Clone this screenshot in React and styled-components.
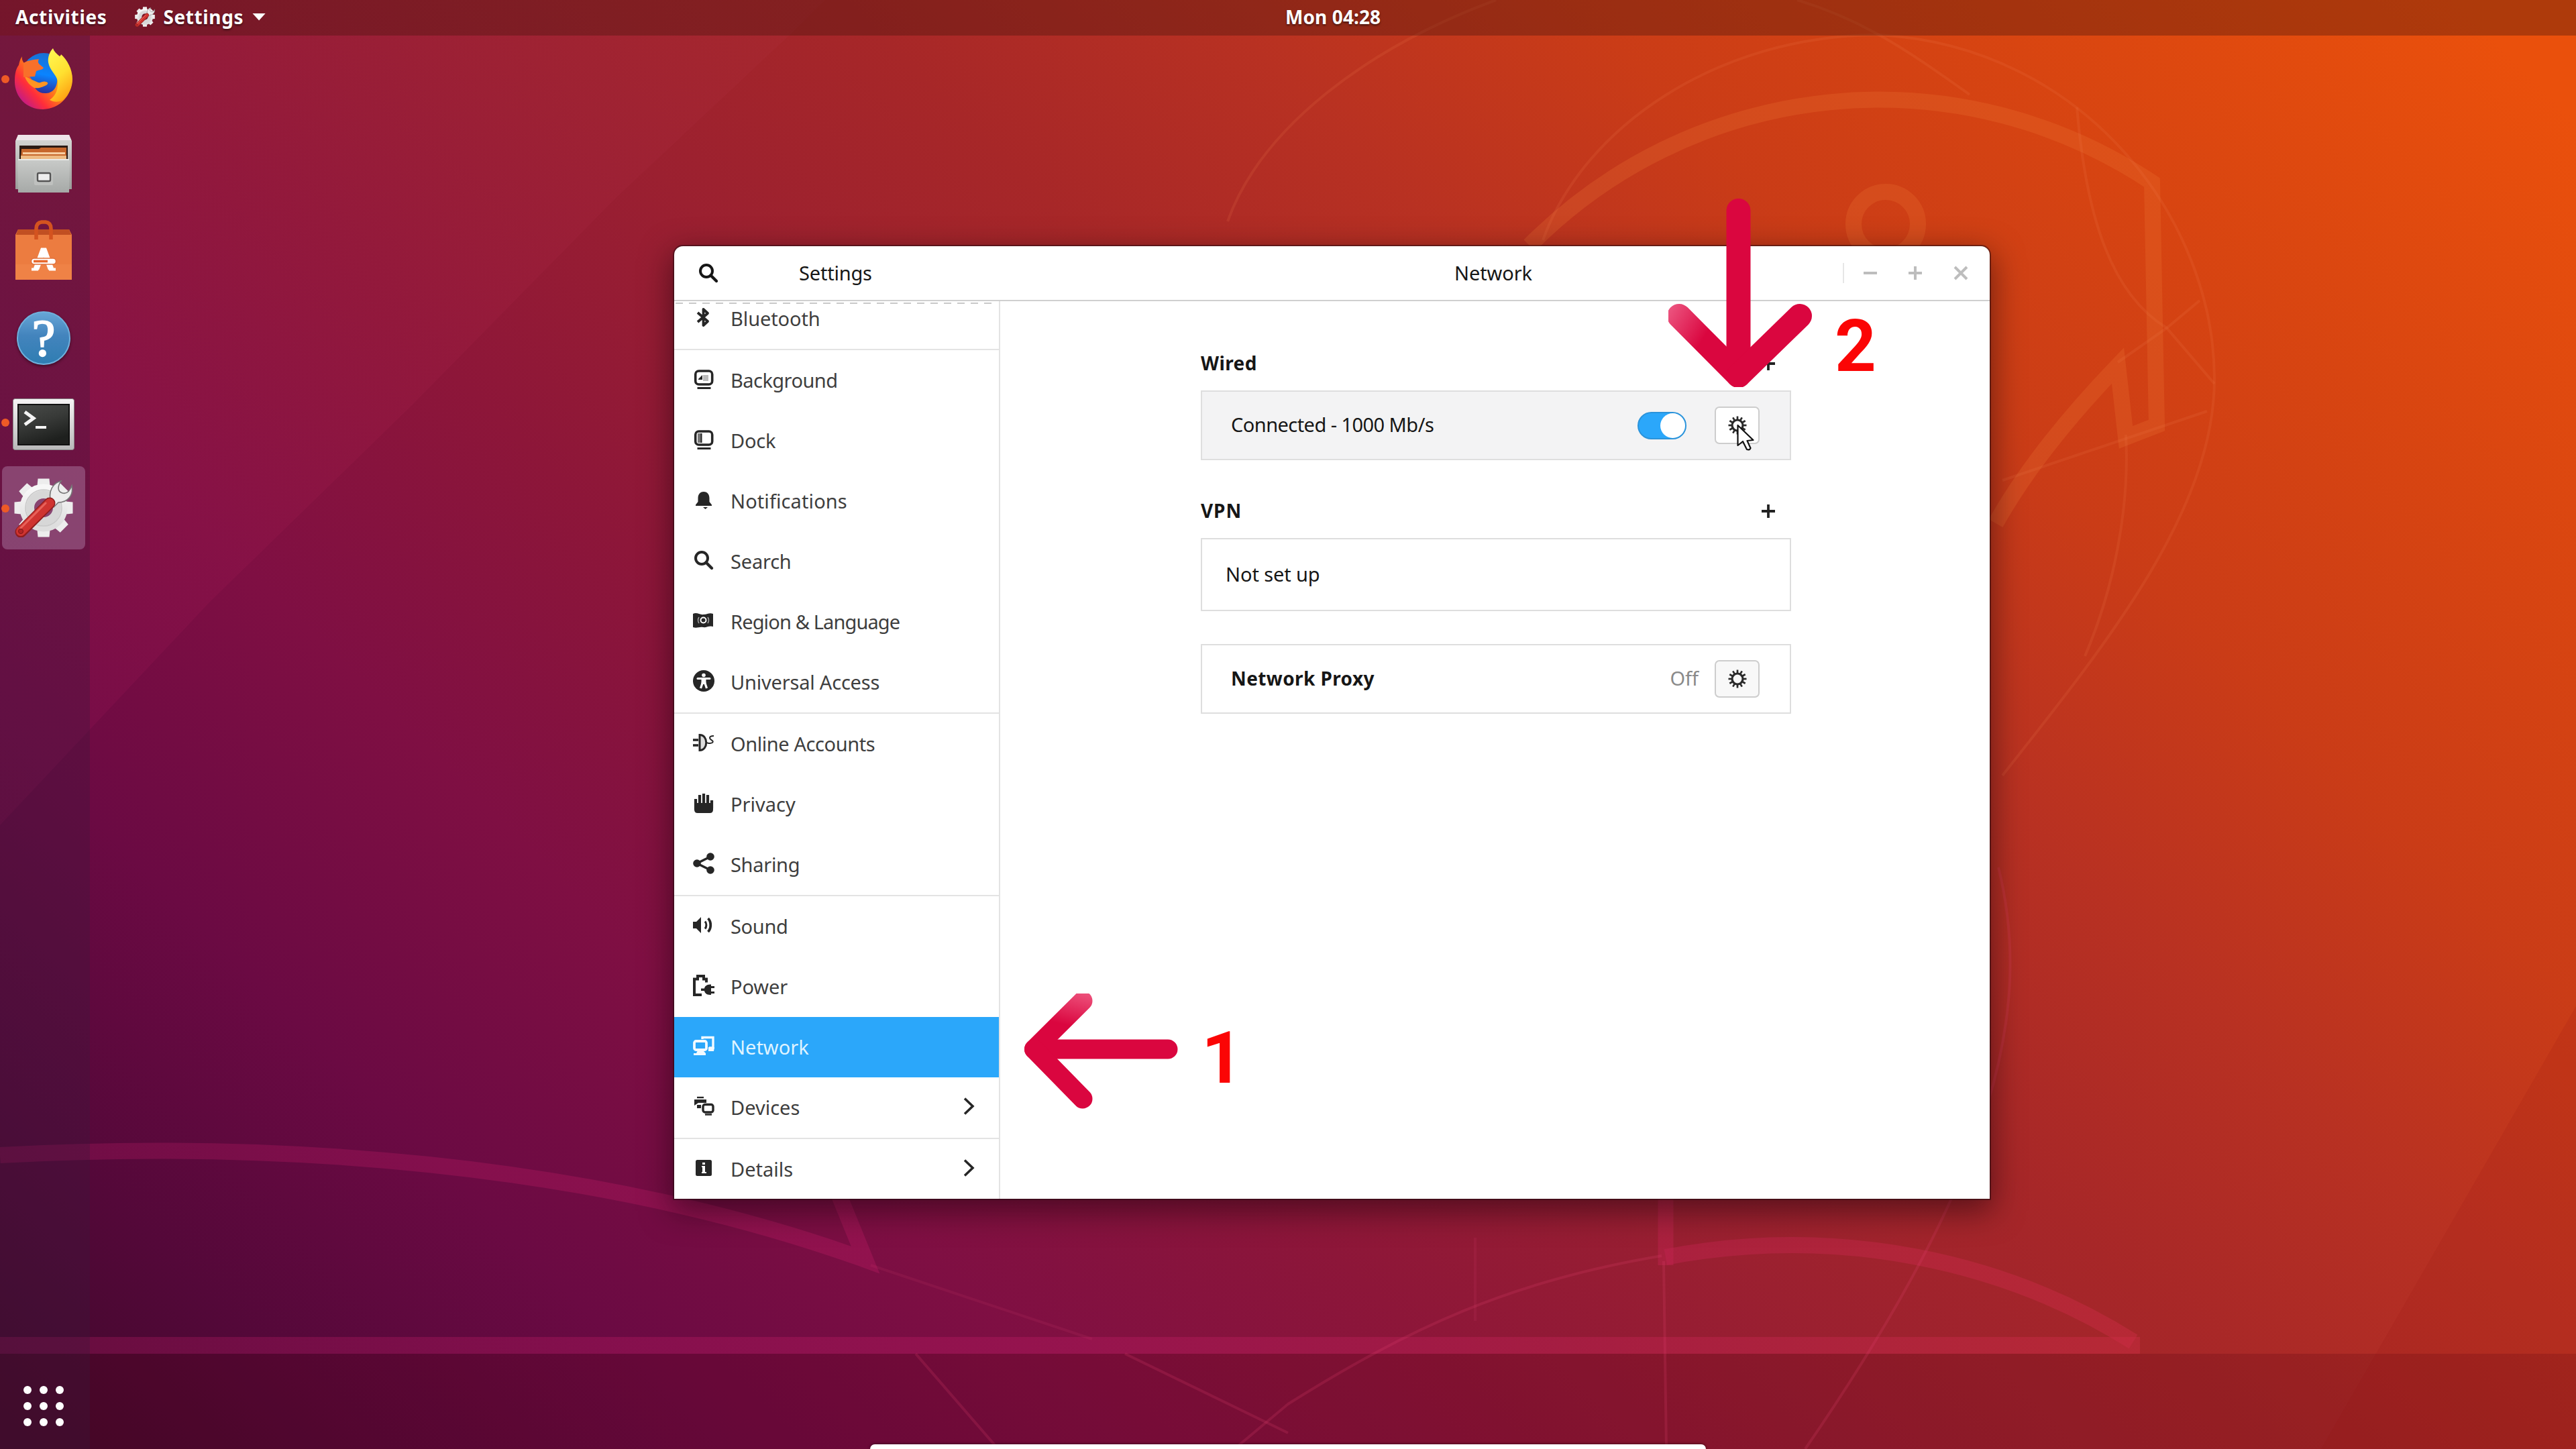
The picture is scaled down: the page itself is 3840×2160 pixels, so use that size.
import React from "react";
import styled, { createGlobalStyle, css } from "styled-components";

const GlobalStyle = createGlobalStyle`
  * { box-sizing: border-box; }
  html, body { margin: 0; padding: 0; background: #6a0a42; }
  svg { display: block; flex: none; }
`;

const Desktop = styled.div`
  position: relative;
  display: flex;
  flex-direction: column;
  width: 3840px;
  height: 2160px;
  overflow: hidden;
  font-family: "Noto Sans", "Open Sans", sans-serif;
  font-size: 29px;
  color: #161616;
  background: linear-gradient(
    45deg,
    #40082b 1%,
    #540839 9%,
    #6b0a43 18%,
    #7f0f43 28%,
    #8d1639 38%,
    #9b2030 48%,
    #a72728 57%,
    #b83122 66%,
    #ca3c17 75%,
    #d84511 85%,
    #ea500c 97%
  );
`;

const WallpaperArt = styled.svg`
  position: absolute;
  inset: 0;
`;

const TopBar = styled.header`
  position: relative;
  display: grid;
  grid-template-columns: 1916px auto 1fr;
  align-items: center;
  height: 53px;
  padding-bottom: 3px;
  background: rgba(70, 20, 10, 0.36);
  color: #fff;
  font-size: 28px;
  font-weight: 700;
  text-shadow: 0 2px 3px rgba(0, 0, 0, 0.5);
`;

const TopLeft = styled.div`
  display: flex;
  align-items: center;
  padding-left: 23px;
`;

const Label = styled.span`
  white-space: nowrap;
  letter-spacing: ${(p) => p.$track || 0}px;
`;

const AppMenu = styled.div`
  display: flex;
  align-items: center;
  margin-left: 41px;
  gap: 13px;
`;

const Caret = styled.i`
  width: 20px;
  height: 11px;
  background: #fff;
  clip-path: polygon(0 0, 100% 0, 50% 100%);
`;

const Body = styled.div`
  position: relative;
  display: flex;
  flex: 1;
  min-height: 0;
`;

const Dock = styled.nav`
  display: flex;
  flex-direction: column;
  width: 134px;
  background: rgba(60, 25, 60, 0.32);
`;

const DockTile = styled.div`
  position: relative;
  display: flex;
  align-items: center;
  justify-content: center;
  width: 124px;
  height: 124px;
  margin: 2px 0 2px 3px;
  padding-top: ${(p) => p.$drop || 0}px;
  border-radius: 8px;
  ${(p) =>
    p.$active &&
    css`
      background: rgba(190, 150, 190, 0.38);
    `}
`;

const RunningDot = styled.i`
  position: absolute;
  left: -1px;
  top: 57px;
  width: 12px;
  height: 12px;
  border-radius: 50%;
  background: #ee5a26;
`;

const AppGrid = styled.div`
  display: grid;
  grid-template-columns: repeat(3, 12px);
  gap: 12px;
  margin: auto 0 34px 35px;
`;

const GridDot = styled.i`
  width: 12px;
  height: 12px;
  border-radius: 50%;
  background: #fff;
`;

const Workspace = styled.main`
  flex: 1;
  padding: 314px 0 0 871px;
`;

const Window = styled.section`
  display: flex;
  flex-direction: column;
  width: 1961px;
  height: 1420px;
  border-radius: 13px 13px 0 0;
  background: #fff;
  box-shadow: 0 0 0 2px rgba(40, 10, 15, 0.5), 0 14px 46px 4px rgba(20, 0, 10, 0.5);
  overflow: hidden;
`;

const TitleBar = styled.div`
  display: flex;
  align-items: center;
  height: 82px;
  border-bottom: 2px solid #cfcfcf;
`;

const SideTitle = styled.div`
  display: flex;
  align-items: center;
  width: 486px;
  padding-left: 35px;
`;

const SettingsTitle = styled.span`
  margin-left: 119px;
  padding-bottom: 2px;
  letter-spacing: -0.2px;
`;

const MainTitle = styled.span`
  width: 1256px;
  padding: 0 0 2px 677px;
  letter-spacing: -0.1px;
`;

const WindowButtons = styled.div`
  display: flex;
  align-items: center;
  gap: 47px;
  height: 30px;
  padding-left: 29px;
  border-left: 2px solid #e6e6e6;
`;

const Content = styled.div`
  display: flex;
  flex: 1;
  min-height: 0;
`;

const Sidebar = styled.aside`
  position: relative;
  width: 486px;
  border-right: 2px solid #e3e3e3;
  overflow: hidden;
`;

const Undershoot = styled.i`
  position: absolute;
  left: 2px;
  right: 2px;
  top: 2px;
  height: 2px;
  background: repeating-linear-gradient(90deg, #c9c9c9 0 11px, #fff 11px 20px);
`;

const NavList = styled.ul`
  list-style: none;
  margin: -19px 0 0;
  padding: 0;
`;

const Group = styled.div`
  & + & {
    border-top: 2px solid #e3e3e3;
  }
`;

const NavRow = styled.li`
  display: flex;
  align-items: center;
  height: 90px;
  padding: 0 36px 0 28px;
  color: ${(p) => (p.$selected ? "#dff3ff" : "#3e3e3e")};
  background: ${(p) => (p.$selected ? "#2ba7fa" : "transparent")};

  > svg {
    color: ${(p) => (p.$selected ? "#f2faff" : "#262626")};
    margin-bottom: 4px;
  }
`;

const NavText = styled.span`
  flex: 1;
  padding: 0 0 2px 24px;
  white-space: nowrap;
  letter-spacing: ${(p) => p.$track || 0}px;
`;

const Pane = styled.div`
  width: 880px;
  margin: 72px 0 0 299px;
`;

const SectionHead = styled.div`
  display: flex;
  align-items: center;
  justify-content: space-between;
  height: 41px;
  margin-bottom: 20px;
  padding-right: 24px;
  font-size: 28px;
  font-weight: 700;

  > span {
    padding-bottom: 2px;
  }
`;

const Card = styled.div`
  display: flex;
  align-items: center;
  height: ${(p) => p.$h || 104}px;
  margin-bottom: ${(p) => p.$gap || 0}px;
  padding: 0 45px 0 ${(p) => p.$pad || 43}px;
  border: 2px solid #dedede;
  background: ${(p) => (p.$hover ? "#f3f3f4" : "#fff")};
`;

const CardLabel = styled.span`
  flex: 1;
  padding-bottom: 3px;
  font-weight: ${(p) => (p.$bold ? 700 : 400)};
  font-size: ${(p) => (p.$bold ? 28 : 29)}px;
  letter-spacing: ${(p) => p.$track || 0}px;
`;

const Muted = styled.span`
  margin-right: 24px;
  padding-bottom: 3px;
  color: #8a8a8a;
`;

const Toggle = styled.span`
  display: flex;
  justify-content: flex-end;
  width: 73px;
  height: 41px;
  margin-right: 42px;
  border-radius: 21px;
  background: #2ba7fa;
  border: 2px solid #2b93da;
`;

const Knob = styled.i`
  width: 37px;
  height: 37px;
  border-radius: 50%;
  background: #fff;
`;

const GearButton = styled.span`
  display: flex;
  align-items: center;
  justify-content: center;
  width: 67px;
  height: 56px;
  border: 2px solid #cdcdcd;
  border-radius: 7px;
  background: ${(p) => (p.$hover ? "#fff" : "#f8f8f8")};
`;

const Overlay = styled.svg`
  position: absolute;
  left: ${(p) => p.$x}px;
  top: ${(p) => p.$y}px;
`;

const StepNumber = styled.span`
  position: absolute;
  left: ${(p) => p.$x}px;
  top: ${(p) => p.$y}px;
  font: 700 108px/108px Roboto, sans-serif;
  color: #fb0505;
`;

const HiddenWindow = styled.div`
  position: absolute;
  left: 1297px;
  bottom: 0;
  width: 1246px;
  height: 7px;
  border-radius: 12px 12px 0 0;
  background: #fff;
  box-shadow: 0 0 4px rgba(0, 0, 0, 0.6);
`;

const Sym = ({ size = 32, children }) => (
  <svg width={size} height={size} viewBox="0 0 32 32" fill="none" stroke="currentColor" strokeWidth="4">
    {children}
  </svg>
);

const fill = { fill: "currentColor", stroke: "none" };

const icons = {
  search: (
    <Sym>
      <circle cx="13" cy="13" r="9" />
      <path d="M19.5 19.5 28 28" strokeWidth="4.4" strokeLinecap="round" />
    </Sym>
  ),
  bluetooth: (
    <Sym>
      <path d="M7 9 22 22 15.500 28V4L22 10 7 23" strokeWidth="3.8" strokeLinejoin="round" />
    </Sym>
  ),
  background: (
    <Sym>
      <rect x="3.700" y="4" width="25" height="20" rx="5" strokeWidth="3.600" />
      <path d="M15 10h8v9h-8z" fill="#bbb" stroke="none" />
      <path d="M8 16l6-6v7H8z" {...fill} />
      <path d="M6.500 29.500h20" strokeWidth="3" />
    </Sym>
  ),
  dock: (
    <Sym>
      <rect x="3.700" y="4" width="25" height="20" rx="5" strokeWidth="3.600" />
      <path d="M7 7h5v14H7z" fill="#777" stroke="none" />
      <path d="M12.500 7v14" strokeWidth="2" />
      <path d="M6.500 29.500h20" strokeWidth="3" />
    </Sym>
  ),
  notifications: (
    <Sym>
      <path d="M16 4c6 0 8.500 4.500 8.500 10v5l3.500 4.500v1.500H4v-1.500L7.500 19v-5C7.500 8.500 10 4 16 4z" {...fill} />
      <path d="M15 27h7l-3.500 3z" {...fill} />
    </Sym>
  ),
  region: (
    <Sym>
      <path d="M0 6c6-3 10 2 16 1 6 0 8-3 14-1v19c-6-2-10 2-15 1-6-1-9 2-15 0z" {...fill} />
      <circle cx="15.500" cy="15.500" r="4" stroke="#fff" strokeWidth="2" />
      <path d="M9 11c-2 3-2 6 0 9M22 11c2 3 2 6 0 9" stroke="#aaa" strokeWidth="1.500" />
    </Sym>
  ),
  access: (
    <Sym>
      <circle cx="16" cy="16" r="16" {...fill} />
      <g stroke="#fff" fill="#fff">
        <circle cx="16" cy="7.500" r="2.800" stroke="none" />
        <path d="M7 12.500h18" strokeWidth="3" strokeLinecap="round" />
        <path d="M16 13v5M14.500 18 11.500 27M17.500 18l3 9" strokeWidth="3.200" />
        <path d="M12.500 13h7v8h-7z" stroke="none" />
      </g>
    </Sym>
  ),
  accounts: (
    <Sym>
      <path d="M0 12h8M0 20h8" strokeWidth="3.400" />
      <path d="M10 4.500c13 0 13 23 0 23z" strokeWidth="3" fill="#ddd" />
      <path d="M20 16c4 1 6 2 9 0 3-3-4-4-4-7 0-3 3-3 6-3" strokeWidth="2" />
    </Sym>
  ),
  privacy: (
    <Sym>
      <path d="M4 10v16M10 4v18M16 2v20M22 4v18M28 12v12" strokeWidth="4.200" />
      <path d="M2 16h28v10q0 5-5 5H7q-5 0-5-5z" {...fill} />
    </Sym>
  ),
  sharing: (
    <Sym>
      <path d="M26 6 6 16l20 10" strokeWidth="3.600" />
      <g {...fill}>
        <circle cx="26" cy="6" r="5.800" />
        <circle cx="6" cy="16" r="5.800" />
        <circle cx="26" cy="26" r="5.800" />
      </g>
    </Sym>
  ),
  sound: (
    <Sym>
      <path d="M0 11h5l7-7v24l-7-7H0z" {...fill} />
      <path d="M18 10.500c2.500 3 2.500 8 0 11" strokeWidth="3" />
      <path d="M22.500 6c5 5 5 15 0 20" strokeWidth="3.800" />
    </Sym>
  ),
  power: (
    <Sym>
      <path d="M13 30H2V6.500h5V2h9v4.500h4v5" strokeWidth="4" />
      <path d="M12 20.500h5c1-5 5-6 10-6V30c-5 0-9-1-10-6h-5z" {...fill} />
      <path d="M26 18.500h6M26 26.500h6" strokeWidth="2.800" />
    </Sym>
  ),
  network: (
    <Sym>
      <path d="M14 6V3.500h16V19h-6" strokeWidth="3.400" />
      <path d="M23 18h9l-1 6h-8z" {...fill} />
      <rect x="2" y="9" width="18" height="13" rx="2.500" strokeWidth="3.800" />
      <path d="M7 23h8l4 4v3H1v-3h4z" {...fill} />
    </Sym>
  ),
  devices: (
    <Sym>
      <path d="M6 3h10" strokeWidth="2.400" />
      <path d="M2 6h18v5H8l-6 4z" {...fill} />
      <path d="M6 14h6v5H6z" {...fill} />
      <rect x="15" y="13.500" width="15" height="11.500" rx="3" strokeWidth="3.400" />
      <path d="M18 28.500h10" strokeWidth="2.400" />
    </Sym>
  ),
  details: (
    <Sym>
      <rect x="4" y="4" width="24" height="24" rx="2.500" {...fill} />
      <path d="M14 8h4v3h-4zM13 13h5v9h2v2h-7v-2h1v-7h-1z" fill="#fff" stroke="none" />
    </Sym>
  ),
};

const Chevron = () => (
  <svg width="17" height="28" viewBox="0 0 17 28" fill="none" stroke="currentColor" strokeWidth="3.6">
    <path d="M2 2.500 14 14 2 25.500" />
  </svg>
);

const Plus = ({ size = 20, color = "#222", w = 3.8 }) => (
  <svg width={size} height={size} viewBox="0 0 20 20" stroke={color} strokeWidth={w}>
    <path d="M0 10h20M10 0v20" />
  </svg>
);

const Gear = () => (
  <svg width="28" height="28" viewBox="-14 -14 28 28" stroke="#2b2b2b">
    <circle r="8" fill="none" strokeWidth="3.200" />
    {Array.from({ length: 12 }, (_, i) => (
      <path key={i} d="M0-8.500V-13.500" strokeWidth="2.700" transform={`rotate(${i * 30})`} />
    ))}
  </svg>
);

const cog = Array.from({ length: 8 }, (_, i) => i * 45);

const ToolsIcon = ({ size = 88 }) => (
  <svg width={size} height={size} viewBox="0 0 88 88">
    <defs>
      <linearGradient id="cogFill" x1="0" y1="0" x2="0" y2="1">
        <stop offset="0" stopColor="#f7f7f7" />
        <stop offset="1" stopColor="#dedede" />
      </linearGradient>
    </defs>
    <g transform="translate(44 44)">
      {cog.map((a) => (
        <path key={a} d="M-10-28-8.500-43.500H8.500L10-28z" fill="#ededed" transform={`rotate(${a})`} />
      ))}
      <circle r="25" fill="none" stroke="url(#cogFill)" strokeWidth="21" />
      <circle r="27" fill="none" stroke="#c9c9c9" strokeWidth="1.600" />
      <circle r="20" fill="none" stroke="#d7d7d7" strokeWidth="12" />
    </g>
    <path
      d="M54 30c-2-10 3-23 16-26-6 9-5 16 2 18 7 2 11-3 14-11 3 14-6 25-20 25l-7 7-10-8z"
      fill="#ececec"
      stroke="#777"
      strokeWidth="1.600"
    />
    <path d="M53 37 10 80" stroke="#8f1c1c" strokeWidth="17" strokeLinecap="round" />
    <path d="M53 37 10 79" stroke="#cf3430" strokeWidth="14" strokeLinecap="round" />
    <path d="M47 37 10 74" stroke="#e8625a" strokeWidth="3" strokeLinecap="round" />
    <circle cx="10" cy="79" r="3.500" fill="#b52525" stroke="#7c1515" />
  </svg>
);

const FirefoxIcon = () => (
  <svg width="88" height="92" viewBox="0 0 88 92">
    <defs>
      <linearGradient id="foxBody" x1="0.95" y1="0.15" x2="0.1" y2="0.85">
        <stop offset="0" stopColor="#fff044" />
        <stop offset="0.3" stopColor="#ffb010" />
        <stop offset="0.55" stopColor="#ff6a20" />
        <stop offset="0.75" stopColor="#ff2d3a" />
        <stop offset="1" stopColor="#c01a8a" />
      </linearGradient>
      <linearGradient id="foxGlobe" x1="0.6" y1="0" x2="0.4" y2="1">
        <stop offset="0" stopColor="#1a6fd0" />
        <stop offset="0.5" stopColor="#0a84ff" />
        <stop offset="1" stopColor="#30208a" />
      </linearGradient>
      <linearGradient id="foxTail" x1="0.3" y1="0" x2="0.7" y2="1">
        <stop offset="0" stopColor="#fff44f" />
        <stop offset="0.5" stopColor="#ffe030" />
        <stop offset="1" stopColor="#ff9c10" />
      </linearGradient>
    </defs>
    <circle cx="44" cy="39" r="32" fill="url(#foxGlobe)" />
    <path
      d="M12 12c-1 4 1 8 3 10 2-2 5-3 8-3l-1 22 4 5c2 12 9 22 22 21 12-1 18-12 16-26l12 2c-3-2-2-4-1-6l11 2c3 28-15 51-43 52C18 91 0 72 1 47c0-9 2-17 6-22 1-5 2-9 5-13z"
      fill="url(#foxBody)"
    />
    <path
      d="M58 0c1 4 5 8 10 12 1-1 2-2 2-3 9 8 17 22 17 37 0 12-5 23-14 31-7 4-15 3-20 0 10-7 13-17 12-28-2-10-12-16-14-28-1-8 2-16 7-21z"
      fill="url(#foxTail)"
    />
    <path d="M16 42c6 2 12 6 20 9 4 1 7-3 12-1 3 1 3 3 0 5-7 3-10 5-18 4-5-3-12-9-14-17z" fill="#ff9422" />
    <path d="M14 22c6-4 15-5 23-6-2 4-1 6 1 8l6 5c-2 4-8 3-11 5l-2 8-17 1z" fill="#f8702a" />
  </svg>
);

const FilesIcon = () => (
  <svg width="86" height="90" viewBox="0 0 86 90">
    <defs>
      <linearGradient id="cabinet" x1="0" y1="0" x2="0" y2="1">
        <stop offset="0" stopColor="#d9d9d7" />
        <stop offset="1" stopColor="#9b9d9b" />
      </linearGradient>
      <linearGradient id="drawer" x1="0" y1="0" x2="0" y2="1">
        <stop offset="0" stopColor="#c9cbc9" />
        <stop offset="1" stopColor="#a6a9a7" />
      </linearGradient>
    </defs>
    <path d="M5 1h76l4 9v72H1V10z" fill="url(#cabinet)" />
    <path d="M5 1h76l3 8H2z" fill="#efe4ea" />
    <path d="M7 17h72v21H7z" fill="#2a1a14" />
    <path d="M10 22h26l3-2h38v16H9z" fill="#c7672c" />
    <path d="M12 27h63v3H12z" fill="#f7cfa3" />
    <path d="M9 32h68v5H9z" fill="#eebb84" />
    <path d="M6 37h74l2 3-1 47H5L4 40z" fill="url(#drawer)" />
    <path d="M5 37h76v2H5z" fill="#e8e9e8" />
    <rect x="29" y="54" width="28" height="22" rx="2" fill="#bfc1bf" />
    <rect x="34" y="58" width="19" height="12" rx="2" fill="#eee" stroke="#555" strokeWidth="2.400" />
  </svg>
);

const SoftwareIcon = () => (
  <svg width="86" height="90" viewBox="0 0 86 90">
    <path d="M5 14h76l4 8v67H1V22z" fill="#ec7c40" />
    <path d="M5 14h76l3 8H2z" fill="#c14f22" />
    <path d="M1 66h84v23H1z" fill="#ef8246" />
    <path d="M32 29V13q0-9 8-10h6q8 1 8 10v16" fill="none" stroke="#d4531f" strokeWidth="5.500" />
    <path d="M32 73 43 43 54 73" fill="none" stroke="#fff" strokeWidth="8.500" strokeLinejoin="bevel" />
    <path d="M25 73.500h10M51 73.500h10" stroke="#fff" strokeWidth="4" />
    <rect x="24.500" y="57" width="37" height="9" rx="4.500" fill="#fff" stroke="#e0703a" strokeWidth="1.500" />
    <path d="M28 61.500h21" stroke="#e8682c" strokeWidth="3.600" />
  </svg>
);

const HelpBadge = styled.span`
  display: flex;
  align-items: center;
  justify-content: center;
  width: 80px;
  height: 80px;
  border-radius: 50%;
  border: 2px solid #6fb0dc;
  background: linear-gradient(#66a5d6, #4384bd 45%, #2f7db2);
  box-shadow: 0 2px 4px rgba(0, 0, 0, 0.45);
  color: #fff;
  font: 400 78px/78px "Liberation Serif", serif;
  -webkit-text-stroke: 2px #fff;
`;

const TerminalIcon = () => (
  <svg width="92" height="78" viewBox="0 0 92 78">
    <defs>
      <linearGradient id="screen" x1="0" y1="0" x2="0.4" y2="1">
        <stop offset="0" stopColor="#4a4c4a" />
        <stop offset="0.5" stopColor="#383a38" />
        <stop offset="1" stopColor="#1e201e" />
      </linearGradient>
      <linearGradient id="frame" x1="0" y1="0" x2="0" y2="1">
        <stop offset="0" stopColor="#f6f4f5" />
        <stop offset="1" stopColor="#b9b9b9" />
      </linearGradient>
    </defs>
    <rect x="0.500" y="0.500" width="91" height="76" rx="3" fill="url(#frame)" stroke="#888" />
    <rect x="8" y="9" width="76" height="60" fill="url(#screen)" stroke="#111" strokeWidth="2" />
    <path d="M18 20 31 29.500 18 39" fill="none" stroke="#f5f5f5" strokeWidth="5" />
    <path d="M34 43h16" stroke="#f5f5f5" strokeWidth="4" />
  </svg>
);

const Wallpaper = () => (
  <WallpaperArt width="3840" height="2160" viewBox="0 0 3840 2160" fill="none">
    <defs>
      <linearGradient id="barTone" x1="0" y1="0" x2="3190" y2="0" gradientUnits="userSpaceOnUse">
        <stop offset="0" stopColor="#b01860" stopOpacity="0.3" />
        <stop offset="0.5" stopColor="#b0185c" stopOpacity="0.45" />
        <stop offset="1" stopColor="#cc2c44" stopOpacity="0.45" />
      </linearGradient>
      <linearGradient id="facet" x1="380" y1="1200" x2="900" y2="0" gradientUnits="userSpaceOnUse">
        <stop offset="0" stopColor="#b01860" stopOpacity="0.14" />
        <stop offset="1" stopColor="#b03040" stopOpacity="0.16" />
      </linearGradient>
    </defs>
    <path d="M1176 53 918 295 615 603 312 898 0 1230V0H1230z" fill="url(#facet)" />
    <path d="M0 2018h3840v142H0z" fill="#500010" fillOpacity="0.2" />
    <path d="M3840 1500V2160H3460z" fill="#901010" fillOpacity="0.12" />
    <g stroke="#f07838" strokeOpacity="0.24" strokeWidth="24">
      <path d="M2280 366A733 733 0 0 1 3208 272L3215 634 3169 652 3157 545C3080 625 3020 700 2975 780" />
      <circle cx="2811" cy="334" r="48" />
    </g>
    <g stroke="url(#barTone)">
      <path d="M0 1722C400 1700 880 1730 1290 1878L1250 1780" strokeWidth="24" />
      <path d="M0 2005.500H3190" strokeWidth="25" />
      <path d="M2483 1780V1886" strokeWidth="23" />
      <path d="M2483 1874C2740 1825 2990 1880 3180 2000" strokeWidth="24" />
    </g>
    <g stroke="#f08050" strokeOpacity="0.15" strokeWidth="4">
      <path d="M2300 358C2360 190 2560 52 2802 52C3110 70 3301 330 3301 565C3301 760 3140 960 2985 1156" />
      <path d="M2679 0C2780 30 2850 80 2936 141" />
      <path d="M3096 160C3110 330 3150 440 3230 489L3301 572" />
      <path d="M3279 448 3230 489 3157 540" />
      <path d="M2985 716 3290 613" />
      <path d="M3169 648C3175 760 3150 880 3108 978" />
      <path d="M1830 330C1880 190 2040 70 2230 0" />
    </g>
    <g stroke="#e04070" strokeOpacity="0.2" strokeWidth="4">
      <path d="M2979 1293C3030 1500 2980 1740 2691 2160" />
      <path d="M2480 1880 2484 2160" />
      <path d="M2199 1845V1969" strokeOpacity="0.12" />
      <path d="M2477 1872C2250 1910 2100 1980 1920 2093L1840 2160" />
      <path d="M1365 2018 1488 2160" />
      <path d="M1677 2018 1920 2136" />
      <path d="M1298 1886 1628 1996" strokeOpacity="0.12" />
    </g>
  </WallpaperArt>
);

const groups = [
  [["bluetooth", "Bluetooth", -0.1]],
  [
    ["background", "Background", -0.55],
    ["dock", "Dock", -0.2],
    ["notifications", "Notifications", 0.1],
    ["search", "Search", -0.2],
    ["region", "Region & Language", -0.87],
    ["access", "Universal Access", -0.2],
  ],
  [
    ["accounts", "Online Accounts", -0.42],
    ["privacy", "Privacy", 0],
    ["sharing", "Sharing", -0.3],
  ],
  [
    ["sound", "Sound", -0.3],
    ["power", "Power", -0.1],
    ["network", "Network", 0],
    ["devices", "Devices", 0, true],
  ],
  [["details", "Details", 0, true]],
];

const dockItems = [
  { icon: <FirefoxIcon />, running: true, drop: 2 },
  { icon: <FilesIcon /> },
  { icon: <SoftwareIcon /> },
  { icon: <HelpBadge>?</HelpBadge>, drop: 5 },
  { icon: <TerminalIcon />, running: true, drop: 7 },
  { icon: <ToolsIcon />, running: true, active: true },
];

export default function App() {
  return (
    <Desktop>
      <GlobalStyle />
      <Wallpaper />
      <TopBar>
        <TopLeft>
          <Label $track={0.65}>Activities</Label>
          <AppMenu>
            <ToolsIcon size={30} />
            <Label $track={0.6}>Settings</Label>
            <Caret />
          </AppMenu>
        </TopLeft>
        <Label $track={0.1}>Mon 04:28</Label>
      </TopBar>
      <Body>
        <Dock>
          {dockItems.map(({ icon, running, active, drop }, i) => (
            <DockTile key={i} $active={active} $drop={drop}>
              {running && <RunningDot />}
              {icon}
            </DockTile>
          ))}
          <AppGrid>
            {Array.from({ length: 9 }, (_, i) => (
              <GridDot key={i} />
            ))}
          </AppGrid>
        </Dock>
        <Workspace>
          <Window>
            <TitleBar>
              <SideTitle>
                {icons.search}
                <SettingsTitle>Settings</SettingsTitle>
              </SideTitle>
              <MainTitle>Network</MainTitle>
              <WindowButtons>
                <svg width="20" height="20" viewBox="0 0 20 20" stroke="#bdbdbd" strokeWidth="4">
                  <path d="M0 10h20" />
                </svg>
                <Plus color="#bdbdbd" w={4} />
                <svg width="22" height="22" viewBox="0 0 22 22" stroke="#bdbdbd" strokeWidth="4">
                  <path d="M2 2 20 20M20 2 2 20" />
                </svg>
              </WindowButtons>
            </TitleBar>
            <Content>
              <Sidebar>
                <NavList>
                  {groups.map((rows, g) => (
                    <Group key={g}>
                      {rows.map(([icon, text, track, more]) => (
                        <NavRow key={text} $selected={icon === "network"}>
                          {icons[icon]}
                          <NavText $track={track}>{text}</NavText>
                          {more && <Chevron />}
                        </NavRow>
                      ))}
                    </Group>
                  ))}
                </NavList>
                <Undershoot />
              </Sidebar>
              <Pane>
                <SectionHead>
                  <Label $track={0.4}>Wired</Label>
                  <Plus />
                </SectionHead>
                <Card $hover $gap={55}>
                  <CardLabel $track={-0.55}>Connected - 1000 Mb/s</CardLabel>
                  <Toggle>
                    <Knob />
                  </Toggle>
                  <GearButton $hover>
                    <Gear />
                  </GearButton>
                </Card>
                <SectionHead>
                  <Label $track={0.9}>VPN</Label>
                  <Plus />
                </SectionHead>
                <Card $h={109} $gap={49} $pad={35}>
                  <CardLabel $track={-0.1}>Not set up</CardLabel>
                </Card>
                <Card>
                  <CardLabel $bold $track={0.4}>
                    Network Proxy
                  </CardLabel>
                  <Muted>Off</Muted>
                  <GearButton>
                    <Gear />
                  </GearButton>
                </Card>
              </Pane>
            </Content>
          </Window>
        </Workspace>
      </Body>
      <HiddenWindow />
      <Overlay $x={2487} $y={295} width="215" height="282" viewBox="2487 295 215 282" fill="none">
        <defs>
          <linearGradient id="downTone" x1="2487" y1="460" x2="2545" y2="495" gradientUnits="userSpaceOnUse">
            <stop offset="0" stopColor="#ec5580" />
            <stop offset="1" stopColor="#da063f" />
          </linearGradient>
        </defs>
        <g strokeWidth="36" strokeLinecap="round" strokeLinejoin="round" stroke="#da063f">
          <path d="M2591.500 314V555" />
          <path d="M2503 471 2591.500 560" stroke="url(#downTone)" />
          <path d="M2591.500 560 2683 471" />
        </g>
      </Overlay>
      <Overlay $x={1526} $y={1481} width="231" height="175" viewBox="1526 1481 231 175" fill="none">
        <defs>
          <linearGradient id="leftTone" x1="1610" y1="1481" x2="1598" y2="1530" gradientUnits="userSpaceOnUse">
            <stop offset="0" stopColor="#ec4d78" />
            <stop offset="1" stopColor="#da063f" />
          </linearGradient>
        </defs>
        <g strokeWidth="29" strokeLinecap="round" strokeLinejoin="round" stroke="#da063f">
          <path d="M1741 1564H1550" />
          <path d="M1541.500 1564 1614 1492" stroke="url(#leftTone)" />
          <path d="M1541.500 1564 1614 1638" />
        </g>
      </Overlay>
      <StepNumber $x={1791} $y={1523}>1</StepNumber>
      <StepNumber $x={2735} $y={462}>2</StepNumber>
      <Overlay $x={2589} $y={632} width="28" height="40" viewBox="0 0 28 40">
        <path
          d="M1.500 2v30l7.500-6 6 12c3 1 5 0 5.500-2l-5-11 9-1z"
          fill="#fff"
          stroke="#111"
          strokeWidth="2.200"
          strokeLinejoin="round"
        />
      </Overlay>
    </Desktop>
  );
}
